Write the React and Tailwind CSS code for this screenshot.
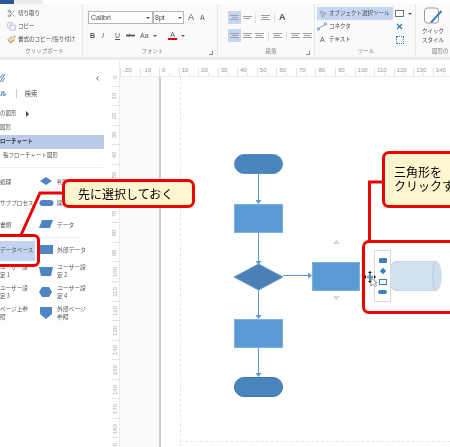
import React from "react";
import { Scissors, Copy, Paintbrush, MousePointer2, X, ChevronLeft } from "lucide-react";

const font = { fontFamily: '"Noto Sans CJK JP", "Liberation Sans", sans-serif' };
const latin = { fontFamily: '"Liberation Sans", sans-serif' };
const hLabels = [-20, -10, 0, 10, 20, 30, 40, 50, 60, 70, 80, 90, 100, 110, 120, 130, 140, 150];
const vLabels = [0, 10, 20, 30, 40, 50, 60, 70, 80, 90, 100, 110, 120, 130, 140, 150, 160, 170, 180, 190];

function Caret() {
  return <span className="w-0 h-0 border-x-[2px] border-x-transparent border-t-[2px] border-t-[#555] ml-1 shrink-0" />;
}

function AlignIcon({ active, lines = 3, className = "" }) {
  return (
    <span className={`shrink-0 h-[13px] flex flex-col justify-center items-center gap-[1px] ${active ? "w-[13px] bg-[#c5d6f2]" : "w-[10px]"} ${className}`}>
      {Array.from({ length: lines }).map((_, i) => (
        <span key={i} className={`h-[1px] bg-[#a0a0a0] ${i % 2 ? "w-[6px]" : "w-[9px]"}`} />
      ))}
    </span>
  );
}

function GroupLabel({ children, launcher }) {
  return (
    <div className="mt-auto h-[11px] flex items-center justify-center relative text-[5.5px] leading-none text-[#7a7a7a]">
      {children}
      {launcher && <span className="absolute right-[4px] bottom-[2px] w-[4px] h-[4px] border-r border-b border-[#888]" />}
    </div>
  );
}

function Ribbon() {
  return (
    <div className="h-[57px] flex flex-col bg-[#fafafa] text-[#444] blur-[0.3px]" style={font}>
      <div className="h-[4px] flex bg-white shrink-0">
        <div className="w-[14px] bg-[#2b579a]" />
        <div className="w-[29px] bg-[#ededed]" />
      </div>
      <div className="flex flex-1 min-h-0">
        <div className="w-[83px] flex flex-col pl-[7px] pt-[3px] border-r border-[#e6e6e6]">
          <div className="h-[13px] flex items-center gap-[2px] text-[5.5px] leading-none whitespace-nowrap"><Scissors size={9} className="text-[#666]" strokeWidth={1.5} />切り取り</div>
          <div className="h-[13px] flex items-center gap-[2px] text-[5.5px] leading-none whitespace-nowrap"><Copy size={9} className="text-[#7a93b5]" strokeWidth={1.5} />コピー</div>
          <div className="h-[13px] flex items-center gap-[2px] text-[5.5px] leading-none whitespace-nowrap"><Paintbrush size={9} className="text-[#b8862b]" strokeWidth={2} />書式のコピー/貼り付け</div>
          <GroupLabel>クリップボード</GroupLabel>
        </div>

        <div className="w-[135px] flex flex-col pl-[5px] pt-[7px] border-r border-[#e6e6e6]">
          <div className="flex items-center h-[13px]">
            <div className="w-[65px] h-[13px] bg-white border border-[#b5b5b5] flex items-center justify-between px-[2px] text-[7px] leading-none" style={latin}>Calibri<Caret /></div>
            <div className="w-[31px] h-[13px] bg-white border border-[#b5b5b5] flex items-center justify-between px-[1px] text-[7px] leading-none" style={latin}>8pt<Caret /></div>
            <span className="ml-[4px] text-[9px] leading-none text-[#555]" style={latin}>A</span>
            <span className="ml-[6px] text-[7px] leading-none text-[#555]" style={latin}>A</span>
          </div>
          <div className="flex items-center h-[13px] mt-[5px] pl-[2px] text-[7px] leading-none text-[#555]" style={latin}>
            <span className="w-[12px] font-bold">B</span>
            <span className="w-[13px] italic">I</span>
            <span className="w-[11px] underline">U</span>
            <span className="w-[14px] text-[5.5px] line-through">abc</span>
            <span className="w-[9px]">Aa</span>
            <Caret />
            <span className="ml-[11px] flex flex-col items-center w-[9px]">
              <span className="text-[7px] leading-none">A</span>
              <span className="w-[9px] h-[2px] bg-[#e00000]" />
            </span>
            <Caret />
          </div>
          <GroupLabel launcher>フォント</GroupLabel>
        </div>

        <div className="w-[97px] flex flex-col pl-[10px] pt-[7px] border-r border-[#e6e6e6]">
          <div className="flex items-center h-[13px]">
            <AlignIcon active />
            <AlignIcon lines={2} className="ml-[1px]" />
            <span className="w-px h-[10px] bg-[#dcdcdc] ml-[3px]" />
            <AlignIcon className="ml-[4px]" />
            <span className="w-px h-[10px] bg-[#dcdcdc] ml-[4px]" />
            <span className="ml-[4px] text-[9px] leading-none font-bold text-[#555]" style={latin}>A</span>
          </div>
          <div className="flex items-center h-[13px] mt-[5px]">
            <AlignIcon active />
            <AlignIcon className="ml-[1px]" />
            <AlignIcon className="ml-[2px]" />
            <span className="w-px h-[10px] bg-[#dcdcdc] ml-[4px]" />
            <AlignIcon className="ml-[3px]" />
            <span className="w-px h-[10px] bg-[#dcdcdc] ml-[4px]" />
            <AlignIcon className="ml-[3px]" />
            <AlignIcon className="ml-[2px]" />
          </div>
          <GroupLabel launcher>段落</GroupLabel>
        </div>

        <div className="w-[101px] flex flex-col pl-[2px] pt-[3px] border-r border-[#e6e6e6]">
          <div className="flex items-center h-[13px]">
            <div className="w-[76px] h-[13px] bg-[#c5d6f2] flex items-center gap-[2px] px-[2px] text-[5.5px] leading-none whitespace-nowrap"><MousePointer2 size={8} strokeWidth={1.5} className="text-[#666]" />オブジェクト選択ツール</div>
            <span className="ml-[2px] w-[9px] h-[7px] bg-white border border-[#777]" /><Caret />
          </div>
          <div className="flex items-center h-[13px] text-[5.5px] leading-none whitespace-nowrap">
            <svg width="12" height="9" viewBox="0 0 12 9" className="shrink-0"><path d="M2 7 C4 3 5 6 8 2" fill="none" stroke="#4a7cb8" strokeWidth="0.8" /><rect x="0.500" y="6" width="2" height="2" fill="none" stroke="#4a7cb8" strokeWidth="0.6" /><rect x="7.500" y="1" width="2" height="2" fill="none" stroke="#4a7cb8" strokeWidth="0.6" /></svg>
            コネクタ
            <X size={9} strokeWidth={3} className="text-[#2f75b5] ml-[44px]" />
          </div>
          <div className="flex items-center h-[13px] text-[5.5px] leading-none whitespace-nowrap">
            <span className="w-[12px] pl-[3px] text-[7px] text-[#555]" style={latin}>A</span>
            テキスト
            <span className="ml-[45px] w-[8px] h-[8px] border border-dotted border-[#2f75b5]" />
          </div>
          <GroupLabel>ツール</GroupLabel>
        </div>

        <div className="flex-1 flex flex-col items-center pt-[3px] overflow-hidden">
          <svg width="20" height="18" viewBox="0 0 20 18" className="shrink-0">
            <rect x="1.500" y="1" width="14" height="15" rx="3" fill="#fff" stroke="#999" />
            <path d="M7 15 L18 3 L19 5 L9 16 Z" fill="#3f7fc0" />
          </svg>
          <div className="text-[5.5px] leading-[9px] mt-[2px] text-center whitespace-nowrap">クイック<br />スタイル</div>
          <div className="mt-auto h-[11px] w-full pl-[16px] flex items-center text-[5.5px] leading-none text-[#7a7a7a] whitespace-nowrap">図形の</div>
        </div>
      </div>
    </div>
  );
}

function Shape({ type }) {
  const c = "#4f86c1";
  const shapes = {
    diamond: <path d="M1 6 L7 2 L13 6 L7 10 Z" fill={c} />,
    term: <rect x="0.500" y="3" width="14" height="6" rx="3" fill={c} />,
    para: <path d="M3 2 H14 L11 10 H0 Z" fill={c} />,
    rect: <rect x="1" y="1" width="13" height="9" fill={c} />,
    trap: <path d="M0 2 H14 L12 11 H2 Z" fill={c} />,
    hex: <path d="M3 1 H10 L13 6 L10 11 H3 L0 6 Z" fill={c} />,
    shield: <path d="M1 0 H13 V7 L7 12 L1 7 Z" fill={c} />,
  };
  return (
    <svg width="15" height="13" viewBox="0 0 15 13" className="shrink-0">{shapes[type]}</svg>
  );
}

function StencilRow({ left, right, type, h = "h-[21px]", selected }) {
  return (
    <div className={`flex items-center ${h}`}>
      <div className={`w-[35px] h-full flex items-center text-[5.6px] leading-[8.500px] whitespace-pre overflow-hidden ${selected ? "bg-[#c5d3f1]" : ""}`}>
        <span className="block">{left}</span>
      </div>
      <div className="ml-[4px] w-[15px] flex justify-center"><Shape type={type} /></div>
      <div className="ml-[3px] text-[5.8px] leading-[8.500px] whitespace-pre">{right}</div>
    </div>
  );
}

function Sidebar() {
  return (
    <div className="w-[110px] shrink-0 bg-white text-[#555] blur-[0.3px] flex flex-col overflow-hidden" style={font}>
      <div className="h-[25px] shrink-0 flex items-center justify-between pr-[9px] pt-[11px]">
        <svg width="6" height="10" viewBox="0 0 6 10"><path d="M0 9 L5 1 M0 5 L3 1 M2 9 L5 5" stroke="#4a7cb8" fill="none" /></svg>
        <ChevronLeft size={7} strokeWidth={3} className="text-[#555]" />
      </div>
      <div className="h-[16px] shrink-0 flex items-center text-[6.500px] leading-none">
        <span className="text-[#2f6fb5] font-bold">ル</span>
        <span className="w-px h-[9px] bg-[#ccc] ml-[9px] mr-[8px]" />
        <span>検索</span>
      </div>
      <div className="mt-[6px] h-[14px] shrink-0 flex items-center text-[5.500px] leading-none">の図形 <span className="ml-[9px] w-0 h-0 border-y-[3px] border-y-transparent border-l-[3px] border-l-[#444]" /></div>
      <div className="h-[14px] shrink-0 flex items-center text-[5.500px] leading-none">図形</div>
      <div className="h-[14px] shrink-0 w-[104px] flex items-center text-[5.500px] leading-none bg-[#b9caeb] font-bold text-[#333]">ローチャート</div>
      <div className="h-[14px] shrink-0 pl-[3px] flex items-center text-[5.500px] leading-none whitespace-nowrap">張フローチャート図形</div>
      <div className="h-[1px] shrink-0 w-[104px] bg-[#eeeeee] mt-[4px] mb-[3px]" />
      <div className="flex flex-col">
        <StencilRow left="処理" right="判断" type="diamond" h="h-[21.500px]" />
        <StencilRow left="サブプロセス" right="開始" type="term" h="h-[21.500px]" />
        <StencilRow left="書類" right="データ" type="para" h="h-[21.500px]" />
        <div className="h-[1px] w-[42px] ml-[40px] mt-[1px] mb-[3px] bg-[#eeeeee]" />
        <StencilRow left="データベース" right="外部データ" type="rect" h="h-[20px]" selected />
        <StencilRow left={"ユーザー設\n定 1"} right={"ユーザー設\n定 2"} type="trap" />
        <StencilRow left={"ユーザー設\n定 3"} right={"ユーザー設\n定 4"} type="hex" />
        <StencilRow left={"ページ上参\n照"} right={"外部ページ\n参照"} type="shield" />
      </div>
    </div>
  );
}

function HRuler() {
  return (
    <div className="h-[17px] bg-white flex overflow-hidden border-b border-[#ececec] shrink-0 blur-[0.3px]" style={latin}>
      {hLabels.map((n) => (
        <div key={n} className="relative w-[19.550px] shrink-0 h-full pl-[3px] pt-[7px] text-[6px] leading-none text-[#999]">
          {n}
          <span className="absolute left-0 bottom-0 w-px h-[8px] bg-[#e2e2e2]" />
          <span className="absolute left-[10px] bottom-0 w-px h-[3px] bg-[#e6e6e6]" />
        </div>
      ))}
    </div>
  );
}

function VRuler() {
  return (
    <div className="w-[10px] shrink-0 bg-white flex flex-col pt-[7px] overflow-hidden border-r border-[#ececec] blur-[0.3px]" style={latin}>
      {vLabels.map((n) => (
        <div key={n} className="relative h-[19.550px] shrink-0 flex items-center justify-center">
          <span className="block -rotate-90 text-[6px] leading-none text-[#aaa]">{n}</span>
          <span className="absolute right-0 bottom-0 h-px w-[7px] bg-[#e2e2e2]" />
        </div>
      ))}
    </div>
  );
}

function Callout({ className, children }) {
  return (
    <div className={`absolute bg-[#fdf6cf] border-[3px] border-[#ee0000] rounded-[7px] text-[12px] leading-[14px] text-black whitespace-nowrap overflow-hidden ${className}`} style={font}>
      {children}
    </div>
  );
}

function FlowArrows() {
  const blue = "#5b9bd5";
  return (
    <svg className="absolute left-0 top-0" width="450" height="447" viewBox="0 0 450 447">
      <g stroke={blue} fill={blue} strokeWidth="1">
        <path d="M258.500 174 V200 M258.500 233 V261 M258.500 290 V315 M258.500 348 V373 M283 275.500 H308" fill="none" />
        <path d="M255.500 200 H261.500 L258.500 204 Z M255.500 261 H261.500 L258.500 265 Z M255.500 315 H261.500 L258.500 319 Z M255.500 373 H261.500 L258.500 377 Z M308 272.500 V278.500 L312 275.500 Z" stroke="none" />
      </g>
      <path d="M234 277 L258.500 264 L283 277 L258.500 290 Z" fill="#4a80b5" stroke="#6d9ccc" />
      <path d="M333 244 L336.500 240 L340 244 Z" fill="#bcdcf0" />
      <path d="M333 296 L336.500 300 L340 296 Z" fill="#bcdcf0" />
      <path d="M62 193 H40 L21 235" fill="none" stroke="#ee0000" strokeWidth="3" />
      <path d="M384 182 H369.500 V240" fill="none" stroke="#ee0000" strokeWidth="3" />
      <path d="M360 275 H366" stroke="#bbb" />
      <path d="M397 261.500 H436 C439 261.500 441 268 441 276 C441 284 439 290.500 436 290.500 H397 C393 290.500 390.500 288 390.500 284 V268 C390.500 264 393 261.500 397 261.500 Z" fill="#cfe0ee" stroke="#c4d6e6" />
      <path d="M436 261.500 C434 261.500 433 268 433 276 C433 284 434 290.500 436 290.500" fill="none" stroke="#b8ccde" />
    </svg>
  );
}

export default function App() {
  return (
    <div className="relative w-[450px] h-[447px] overflow-hidden bg-white flex flex-col">
      <Ribbon />
      <div className="h-[3px] bg-[#ececec] shrink-0" />
      <div className="flex flex-1 min-h-0">
        <Sidebar />
        <VRuler />
        <div className="flex-1 min-w-0 flex flex-col">
          <HRuler />
          <div className="flex-1 min-h-0 flex">
            <div className="w-[41px] shrink-0 bg-[#fafafa] border-r-2 border-[#c9ccd3]" />
            <div className="w-[20px] shrink-0 bg-white border-r border-dashed border-[#e6e6e6]" />
            <div className="flex-1 bg-white relative">
              <div className="absolute left-[-1px] right-0 bottom-[5px] border-b border-dashed border-[#e6e6e6]" />
            </div>
          </div>
        </div>
      </div>

      <FlowArrows />
      <div className="absolute left-[234px] top-[154px] w-[49px] h-[20px] rounded-full bg-[#4a84bd] border border-[#5d8fc4]" />
      <div className="absolute left-[234px] top-[204px] w-[49px] h-[29px] bg-[#5b9bd5] border border-[#7fb0de]" />
      <div className="absolute left-[312px] top-[262px] w-[48px] h-[29px] bg-[#5b9bd5] border border-[#7fb0de]" />
      <div className="absolute left-[234px] top-[319px] w-[49px] h-[29px] bg-[#5b9bd5] border border-[#7fb0de]" />
      <div className="absolute left-[234px] top-[377px] w-[49px] h-[20px] rounded-full bg-[#4a84bd] border border-[#3f74ad]" />

      {/* 選択された形状と枠 */}
      <div className="absolute left-[374px] top-[250px] w-[17px] h-[52px] bg-white border border-[#d8d8d8] flex flex-col items-center justify-center gap-[5px]">
        <span className="w-[8px] h-[5px] bg-[#3f7fc0] rounded-[1px]" />
        <span className="w-[6px] h-[6px] bg-[#3f7fc0] rotate-45 scale-75" />
        <span className="w-[8px] h-[6px] bg-white border border-[#3f7fc0]" />
        <span className="w-[9px] h-[4px] bg-[#3f7fc0] rounded-full" />
      </div>
      <div className="absolute left-[362px] top-[240px] w-[100px] h-[74px] border-[3px] border-[#ee0000] rounded-[7px]" />
      <svg className="absolute left-[364px] top-[270px]" width="14" height="17" viewBox="0 0 14 17">
        <path d="M6 1 L8 3 H4 Z M6 13 L8 11 H4 Z M0 7 L2 5 V9 Z M12 7 L10 5 V9 Z" fill="#111" />
        <path d="M3 7 H9 M6 3 V11" stroke="#111" />
        <circle cx="6" cy="7" r="2" fill="#4fa3d8" />
        <path d="M7 8 L7 16 L9 14 L11 16.500 L12.500 15.500 L11 13 L13 12.500 Z" fill="#fff" stroke="#666" strokeWidth="0.7" />
      </svg>

      {/* データベースの赤枠 */}
      <div className="absolute left-[-8px] top-[234px] w-[48px] h-[33px] border-[3px] border-[#ee0000] rounded-[6px]" />

      <Callout className="left-[62px] top-[179px] w-[133px] h-[29px] flex items-center pl-[13px]">先に選択しておく</Callout>
      <Callout className="left-[382px] top-[151px] w-[90px] h-[57px] pl-[9px] pt-[11px]">三角形を<br />クリックする</Callout>
    </div>
  );
}
